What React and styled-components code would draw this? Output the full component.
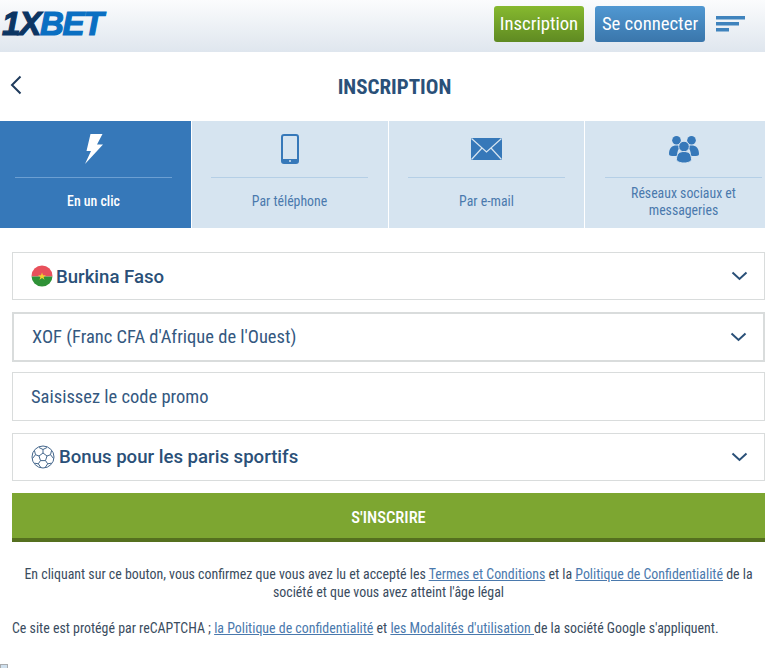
import styled, { createGlobalStyle } from 'styled-components'

const GlobalStyle = createGlobalStyle`
  html, body {
    margin: 0;
    padding: 0;
    background: #fff;
  }
  body {
    font-family: Roboto, "Liberation Sans", sans-serif;
    font-stretch: 75%;
  }
`

const Page = styled.div`
  width: 767px;
  height: 668px;
  overflow: hidden;
  position: relative;
  background: #fff;
`

const Header = styled.header`
  width: 765px;
  height: 52px;
  display: flex;
  align-items: center;
  justify-content: space-between;
  background: linear-gradient(#fbfcfd, #dfe6ee);
`

const Logo = styled.div`
  margin: 0 0 5px 2px;
  font-family: "Liberation Sans", sans-serif;
  font-stretch: normal;
  font-size: 33px;
  font-weight: 700;
  font-style: italic;
  line-height: 30px;
  letter-spacing: -1.2px;
  -webkit-text-stroke: 1.2px currentColor;
  color: #0a6fc2;
`

const LogoDark = styled.span`
  color: #0b3563;
`

const HeaderActions = styled.div`
  display: flex;
  align-items: center;
  margin: 0 20px 4px 0;
`

const HeaderButton = styled.button`
  height: 36px;
  width: ${p => p.$width}px;
  margin-right: ${p => p.$gap}px;
  padding: 0 0 1px;
  border: none;
  border-radius: 3px;
  color: #fff;
  font-family: inherit;
  font-stretch: 75%;
  font-size: 18.7px;
  background: ${p => p.$green
    ? 'linear-gradient(#86b92f, #5f8a22)'
    : 'linear-gradient(#5098d2, #3a76ab)'};
`

const BurgerIcon = styled.svg`
  display: block;
  width: 29px;
  height: 16px;
`

const TitleRow = styled.div`
  height: 69px;
  width: 765px;
  display: flex;
  align-items: center;
  justify-content: center;
  position: relative;
`

const BackIcon = styled.svg`
  position: absolute;
  left: 10px;
  top: 23px;
  width: 13px;
  height: 20px;
`

const Title = styled.h1`
  margin: 0 0 -1px 24px;
  font-size: 21px;
  font-weight: 700;
  color: #2a5078;
`

const Tabs = styled.div`
  display: grid;
  grid-template-columns: 191px 196px 195px 196px;
  column-gap: 1px;
  width: 765px;
  height: 107px;
  overflow: hidden;
`

const Tab = styled.div`
  display: flex;
  flex-direction: column;
  align-items: flex-start;
  padding-left: ${p => p.$left}px;
  background: ${p => (p.$active ? '#3678b9' : '#d6e4f0')};
  color: ${p => (p.$active ? '#fff' : '#4a79ad')};
`

const TabIconSlot = styled.div`
  height: 56px;
  width: 157px;
  display: flex;
  align-items: center;
  justify-content: center;
  border-bottom: 1px solid ${p => (p.$active ? '#6c9fd2' : '#b5cfe6')};
  color: ${p => (p.$active ? '#fff' : '#3678b9')};
`

const TabLabel = styled.div`
  flex: 1;
  width: 157px;
  display: flex;
  align-items: center;
  justify-content: center;
  text-align: center;
  font-size: 13.8px;
  line-height: 16.5px;
  font-weight: ${p => (p.$active ? 500 : 400)};
  padding-bottom: 3px;
`

const Form = styled.form`
  display: flex;
  flex-direction: column;
  margin: 24px 2px 0 12px;
`

const Field = styled.div`
  box-sizing: border-box;
  height: ${p => p.$height || 48}px;
  margin-bottom: ${p => p.$after}px;
  display: flex;
  align-items: center;
  padding-left: 18px;
  padding-right: 16px;
  border: ${p => p.$thick || 1}px solid #d9dcdc;
  background: #fff;
  color: #2a5078;
`

const FieldText = styled.span`
  flex: 1;
  font-size: 18.5px;
  color: #34587f;
`

const FieldStrong = styled.span`
  flex: 1;
  margin-left: ${p => p.$gap}px;
  padding-top: ${p => p.$down || 0}px;
  font-size: 18.6px;
  font-weight: 500;
  font-stretch: 100%;
  color: #2a5078;
`

const Chevron = styled.svg`
  width: 17px;
  height: 10px;
`

const SubmitButton = styled.button`
  box-sizing: border-box;
  height: 49px;
  padding: 3px 0 0;
  border: none;
  border-bottom: 4px solid #55701f;
  background: #7da631;
  color: #fff;
  font-family: inherit;
  font-stretch: 75%;
  font-size: 16.5px;
  font-weight: 500;
`

const Notice = styled.p`
  margin: 23px 0 0;
  text-align: center;
  font-size: 13.9px;
  line-height: 18px;
  color: #3a4c5e;
`

const Recaptcha = styled.p`
  margin: 18px 0 0;
  font-size: 13.9px;
  line-height: 18px;
  color: #3a4c5e;
`

const TextLink = styled.a`
  color: #4a79ad;
  text-decoration: underline;
`

const BrokenImage = styled.div`
  position: absolute;
  left: 0;
  bottom: 0;
  width: 8px;
  height: 4px;
  box-sizing: border-box;
  border: 1px solid #a9acaf;
  border-bottom: none;
  background: #cfe0ee;
`

const Arrow = () => (
  <Chevron viewBox="0 0 17 10">
    <path d="M1.500 1.500 8.500 8l7-6.500" fill="none" stroke="#2a5078" strokeWidth="2" />
  </Chevron>
)

const FlagIcon = () => (
  <svg width="22" height="22" viewBox="0 0 22 22">
    <defs>
      <clipPath id="flag-disc"><circle cx="11" cy="11" r="10.500" /></clipPath>
    </defs>
    <g clipPath="url(#flag-disc)">
      <rect width="22" height="11.500" fill="#e8505b" />
      <rect y="11.500" width="22" height="10.500" fill="#2f9237" />
      <path d="M11 7.500l1 2.800h3l-2.400 1.700.9 2.800-2.500-1.700-2.500 1.700.9-2.800L7 10.300h3z" fill="#f3d02f" />
    </g>
  </svg>
)

const BallIcon = () => (
  <svg width="24" height="24" viewBox="0 0 24 24" fill="none" stroke="#45678c" strokeWidth="1">
    <circle cx="12" cy="12" r="11" />
    <path d="M12 8l4 3-1.500 4.600h-5L8 11z" />
    <path d="M12 8V4.500M16 11l3.500-1.300M14.500 15.600l2.200 3.200M9.500 15.600l-2.200 3.200M8 11 4.500 9.700" />
    <path d="M8 2.500 12 4.500l4-2M19.500 9.700l1-4M19.500 9.700 22.500 13.500M16.700 18.800l3.600-.6M16.700 18.800 14 22.700M7.300 18.800l-3.600-.6M7.300 18.800 10 22.700M4.500 9.700l-1-4M4.500 9.700 1.500 13.500" />
  </svg>
)

const App = () => (
  <Page>
    <GlobalStyle />
    <Header>
      <Logo><LogoDark>1X</LogoDark>BET</Logo>
      <HeaderActions>
        <HeaderButton $green $width={90} $gap={11}>Inscription</HeaderButton>
        <HeaderButton $width={110} $gap={11}>Se connecter</HeaderButton>
        <BurgerIcon viewBox="0 0 29 16">
          <rect width="29" height="3.500" fill="#3f83bd" />
          <rect y="6" width="23" height="3.500" fill="#3f83bd" />
          <rect y="12" width="13" height="3.500" fill="#3f83bd" />
        </BurgerIcon>
      </HeaderActions>
    </Header>

    <TitleRow>
      <BackIcon viewBox="0 0 13 20">
        <path d="M10.500 1.500 2 10l8.500 8.500" fill="none" stroke="#1f3b5c" strokeWidth="2" />
      </BackIcon>
      <Title>INSCRIPTION</Title>
    </TitleRow>

    <Tabs>
      <Tab $active $left={15}>
        <TabIconSlot $active>
          <svg width="18" height="30" viewBox="0 0 18 30" fill="currentColor">
            <path d="M5.500 0H17.500L12 10.500H18L0 30 6 17H1.500z" />
          </svg>
        </TabIconSlot>
        <TabLabel $active>En un clic</TabLabel>
      </Tab>
      <Tab $left={19}>
        <TabIconSlot>
          <svg width="18" height="30" viewBox="0 0 18 30">
            <rect x="1" y="1" width="16" height="28" rx="2" fill="none" stroke="currentColor" strokeWidth="2" />
            <rect x="1" y="25" width="16" height="4" fill="currentColor" />
            <circle cx="9" cy="27" r="1" fill="#d6e4f0" />
          </svg>
        </TabIconSlot>
        <TabLabel>Par téléphone</TabLabel>
      </Tab>
      <Tab $left={19}>
        <TabIconSlot>
          <svg width="31" height="22" viewBox="0 0 31 22">
            <rect width="31" height="22" fill="currentColor" />
            <path d="M.5.500 15.500 14 30.500.500M.5 21.500 11 10M30.500 21.500 20 10" fill="none" stroke="#d6e4f0" strokeWidth="1.200" />
          </svg>
        </TabIconSlot>
        <TabLabel>Par e-mail</TabLabel>
      </Tab>
      <Tab $left={20}>
        <TabIconSlot>
          <svg width="30" height="27" viewBox="0 0 30 27" fill="currentColor">
            <circle cx="7.500" cy="4.300" r="4.300" />
            <circle cx="22.500" cy="4.300" r="4.300" />
            <path d="M0 18c0-6 3-8.500 7.500-8.500 2 0 3 .5 4 1-2 2-3.500 5-3.500 9.500H3c-2 0-3-1-3-2zM30 18c0-6-3-8.500-7.500-8.500-2 0-3 .5-4 1 2 2 3.500 5 3.500 9.500h5c2 0 3-1 3-2z" />
            <circle cx="15" cy="10.500" r="5.300" stroke="#d6e4f0" strokeWidth="1" />
            <path d="M7.500 23.500c0-5.500 2.500-8 7.500-8s7.500 2.500 7.500 8c0 2-3.500 3.500-7.500 3.500s-7.500-1.500-7.500-3.500z" stroke="#d6e4f0" strokeWidth="1" />
          </svg>
        </TabIconSlot>
        <TabLabel>Réseaux sociaux et messageries</TabLabel>
      </Tab>
    </Tabs>

    <Form>
      <Field $after={12}>
        <FlagIcon />
        <FieldStrong $gap={3} $down={1}>Burkina Faso</FieldStrong>
        <Arrow />
      </Field>
      <Field $height={50} $after={10} $thick={2}>
        <FieldText>XOF (Franc CFA d'Afrique de l'Ouest)</FieldText>
        <Arrow />
      </Field>
      <Field $height={49} $after={12}>
        <FieldText>Saisissez le code promo</FieldText>
      </Field>
      <Field $after={12}>
        <BallIcon />
        <FieldStrong $gap={4}>Bonus pour les paris sportifs</FieldStrong>
        <Arrow />
      </Field>
      <SubmitButton type="button">S'INSCRIRE</SubmitButton>
      <Notice>
        En cliquant sur ce bouton, vous confirmez que vous avez lu et accepté les <TextLink>Termes et Conditions</TextLink> et la <TextLink>Politique de Confidentialité</TextLink> de la société et que vous avez atteint l'âge légal
      </Notice>
      <Recaptcha>
        Ce site est protégé par reCAPTCHA ; <TextLink>la Politique de confidentialité</TextLink> et <TextLink>les Modalités d'utilisation </TextLink>de la société Google s'appliquent.
      </Recaptcha>
    </Form>
    <BrokenImage />
  </Page>
)

export default App
